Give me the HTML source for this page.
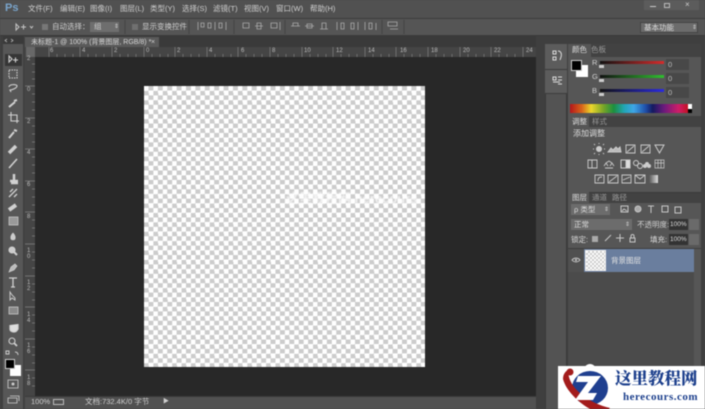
<!DOCTYPE html>
<html lang="zh"><head><meta charset="utf-8"><style>
html,body{margin:0;padding:0;width:705px;height:409px;overflow:hidden;background:#4a4a4a}
*{box-sizing:border-box}
.a{position:absolute}
#m{filter:blur(.55px)}
.t{position:absolute;white-space:nowrap;font-family:"Liberation Sans","Noto Sans CJK SC",sans-serif;font-size:7.500px;color:#cfcfcf;line-height:10px}
.r{font-size:6px;line-height:9px;color:#bdbdbd}
.v{font-size:6px;line-height:6px;width:5px;white-space:normal;color:#bdbdbd;left:27px}
svg{position:absolute;left:0;top:0;overflow:visible}
.ck{background-color:#fff;background-image:repeating-conic-gradient(#cccccc 0 25%,#fff 0 50%)}
</style></head><body>
<div class="a" id="m" style="left:0;top:0;width:705px;height:409px;overflow:hidden">
<div class="a" style="left:0;top:0;width:705px;height:18px;background:#515151"></div>
<div class="a" style="left:0;top:18px;width:705px;height:18px;background:#555;border-top:1px solid #3c3c3c;border-bottom:1px solid #3a3a3a"></div>
<div class="a" style="left:0;top:36px;width:705px;height:373px;background:#444"></div>
<div class="t" style="left:5px;top:2px;font-size:11px;line-height:13px;font-weight:bold;color:#7aa5cc">Ps</div>
<div class="t" style="left:28px;top:4px">文件(F)</div><div class="t" style="left:60px;top:4px">编辑(E)</div><div class="t" style="left:90px;top:4px">图像(I)</div><div class="t" style="left:120px;top:4px">图层(L)</div><div class="t" style="left:150px;top:4px">类型(Y)</div><div class="t" style="left:182px;top:4px">选择(S)</div><div class="t" style="left:213px;top:4px">滤镜(T)</div><div class="t" style="left:244px;top:4px">视图(V)</div><div class="t" style="left:276px;top:4px">窗口(W)</div><div class="t" style="left:310px;top:4px">帮助(H)</div>
<div class="a" style="left:644px;top:0;width:55px;height:10px;background:#5c5c5c"></div>
<div class="a" style="left:650px;top:6px;width:6px;height:1px;background:#ccc"></div><div class="a" style="left:664px;top:3px;width:6px;height:5px;border:1px solid #bbb"></div><div class="t" style="left:685px;top:0;font-size:8px">×</div>
<svg width="705" height="409" fill="none" stroke="#c6c6c6">
<path d="M16 24v6l3-3zM21 27h5M23.500 24.500v5M30 26l1.500 2 1.500-2" stroke-width="1"/>
<path d="M198 22v8M201 23h3v4h-3zM208 23h3v5h-3zM215 22v8M219 23h3v5h-3zM226 22v8M243 23h6v5h-6zM255 26h8M257 23h4v6h-4zM271 23h6v5h-6zM280 22v8M291 26h9M293 23h5v3h-5zM305 26h9M307 24h5v4h-5zM320 29h8M322 23h4v6h-4zM337 22v8M341 23h3v6h-3zM351 23h3v6h-3zM358 22v8M365 22v8M369 23h3v6h-3zM376 23v7M388 22h9v4h-9zM390 29h8" stroke="#aaa" stroke-width=".8"/>
<path d="M189 20v14M234 20v14M285 20v14M382 20v14M404 20v14M125 20v14" stroke="#444"/>
</svg>
<div class="a" style="left:42px;top:24px;width:6px;height:6px;background:#777"></div><div class="t" style="left:52px;top:22px">自动选择：</div>
<div class="a" style="left:90px;top:22px;width:29px;height:10px;background:#6e6e6e"></div><div class="t" style="left:94px;top:22px">组</div><div class="t" style="left:114px;top:22px;font-size:6px">⇕</div>
<div class="a" style="left:132px;top:24px;width:6px;height:6px;background:#707070"></div><div class="t" style="left:142px;top:22px">显示变换控件</div>
<div class="a" style="left:640px;top:22px;width:58px;height:11px;background:#6c6c6c;border:1px solid #444"></div><div class="t" style="left:644px;top:23px;color:#ddd">基本功能</div><div class="t" style="left:692px;top:23px;font-size:6px">⇕</div>

<!-- left tool panel -->
<div class="a" style="left:0;top:36px;width:3px;height:373px;background:#3f3f3f"></div>
<div class="a" style="left:3px;top:44px;width:21px;height:365px;background:#575757;border-right:1px solid #3c3c3c"></div>
<div class="a" style="left:3px;top:36px;width:21px;height:8px;background:#3a3a3a"></div>
<div class="a" style="left:5px;top:54px;width:17px;height:12px;background:#363636"></div>
<svg width="705" height="409" fill="none" stroke="#d0d0d0" stroke-width="1.100" style="z-index:3">
<path d="M7 39l-2 1.500 2 1.500M11 39l2 1.500-2 1.500" stroke-width=".7"/>
<path d="M9 56v6l3-3zM13 60h5M15.500 57.500v5"/>
<path d="M9 70h8v8H9z" stroke-dasharray="1.500 1"/>
<path d="M9 87c0-3 8-3 8-1s-5 4-7 4l1 2"/>
<path d="M9 107l6-5M14 101l3-1" stroke-width="2"/>
<path d="M11 112v9h8M8 115h9v8"/>
<path d="M9 138l5-6M14 130l3 1" stroke-width="2"/>
<path d="M9 153l7-7" stroke-width="3.500"/>
<path d="M9 168l8-9" stroke-width="1.600"/>
<path d="M11 183h7M14 174v6M10 181h8" stroke-width="2.500"/>
<path d="M9 197l8-8M10 192l3-3M14 197l3-3" stroke-width="1.300"/>
<path d="M9 210l7-5" stroke-width="4"/>
<path d="M9 217h9v8H9z" fill="#999" stroke="#ccc" stroke-width=".7"/>
<path d="M13 233c-3 3-3 7 0 7s3-4 0-7z" fill="#ccc" stroke-width=".6"/>
<circle cx="12" cy="250" r="3" fill="#ccc"/><path d="M14 252l3 3" stroke-width="2"/>
<path d="M9 272l2-5 4-3 2 2-3 4z" fill="#bbb" stroke-width=".7"/>
<path d="M9 278h8M13 278v9M11 287h4" stroke-width="1.300"/>
<path d="M10 292v8l2-2 3 2v-2l-3-3z" stroke-width=".9"/>
<path d="M9 307h9v7H9z" fill="#8a8a8a" stroke-width=".7"/>
<path d="M10 325v4c0 2 2 3 4 3s3-1 4-3v-5" fill="#ddd" stroke-width="1.300"/>
<circle cx="12" cy="341" r="3"/><path d="M14 343l3 3" stroke-width="1.800"/>
<path d="M15 352c2 0 3 1 3 3M6 351h3v3H6z" stroke-width=".9"/>
<path d="M8 380h10v8H8z" stroke-width=".8"/><circle cx="13" cy="384" r="1.500" fill="#ccc" stroke="none"/>
<path d="M8 398h9v5H8zM10 396h9v5" stroke-width=".8"/>
</svg>
<div class="a" style="left:10px;top:365px;width:11px;height:11px;background:#fff"></div>
<div class="a" style="left:5px;top:359px;width:10px;height:10px;background:#000;border:1px solid #ccc"></div>

<!-- tab -->
<div class="a" style="left:25px;top:36px;width:520px;height:11px;background:#3a3a3a"></div>
<div class="a" style="left:25px;top:37px;width:134px;height:10px;background:#5a5a5a"></div>
<div class="t" style="left:31px;top:38px;font-size:7px;line-height:9px;color:#d8d8d8">未标题-1 @ 100% (背景图层, RGB/8) *</div><div class="t" style="left:151px;top:38px;font-size:7px;line-height:9px">×</div>

<!-- rulers -->
<div class="a" style="left:25px;top:47px;width:510px;height:10px;background:#454545"></div>
<div class="a" style="left:25px;top:47px;width:10px;height:349px;background:#454545"></div>
<div class="a" style="left:26px;top:47px;width:9px;height:10px;background:#686868"></div>
<div class="a" style="left:35px;top:57px;width:501px;height:339px;background:#282828"></div>
<svg width="705" height="409" fill="none" stroke="#808080" stroke-width=".7">
<path d="M49 47v10M80 47v10M112 47v10M144 47v10M175 47v10M207 47v10M238 47v10M270 47v10M302 47v10M333 47v10M365 47v10M396 47v10M428 47v10M460 47v10M491 47v10M523 47v10"/>
<path d="M57 57v-3M65 57v-3M73 57v-3M88 57v-3M96 57v-3M104 57v-3M120 57v-3M128 57v-3M136 57v-3M152 57v-3M160 57v-3M168 57v-3M183 57v-3M191 57v-3M199 57v-3M215 57v-3M223 57v-3M231 57v-3M246 57v-3M254 57v-3M262 57v-3M278 57v-3M286 57v-3M294 57v-3M310 57v-3M318 57v-3M326 57v-3M341 57v-3M349 57v-3M357 57v-3M373 57v-3M381 57v-3M389 57v-3M404 57v-3M412 57v-3M420 57v-3M436 57v-3M444 57v-3M452 57v-3M468 57v-3M476 57v-3M484 57v-3M499 57v-3M507 57v-3M515 57v-3"/>
<path d="M25 86h10M25 118h10M25 149h10M25 181h10M25 212h10M25 244h10M25 276h10M25 307h10M25 339h10M25 370h10"/>
<path d="M32 64h3M32 72h3M32 79h3M32 94h3M32 102h3M32 110h3M32 126h3M32 134h3M32 142h3M32 157h3M32 165h3M32 173h3M32 189h3M32 197h3M32 205h3M32 220h3M32 228h3M32 236h3M32 252h3M32 260h3M32 268h3M32 284h3M32 292h3M32 300h3M32 315h3M32 323h3M32 331h3M32 347h3M32 355h3M32 363h3M32 378h3M32 386h3"/>
</svg>
<div class="t r" style="left:50px;top:47px">6</div><div class="t r" style="left:82px;top:47px">4</div><div class="t r" style="left:114px;top:47px">2</div><div class="t r" style="left:146px;top:47px">0</div><div class="t r" style="left:177px;top:47px">2</div><div class="t r" style="left:209px;top:47px">4</div><div class="t r" style="left:241px;top:47px">6</div><div class="t r" style="left:272px;top:47px">8</div><div class="t r" style="left:304px;top:47px">10</div><div class="t r" style="left:336px;top:47px">12</div><div class="t r" style="left:368px;top:47px">14</div><div class="t r" style="left:400px;top:47px">16</div><div class="t r" style="left:431px;top:47px">18</div><div class="t r" style="left:463px;top:47px">20</div><div class="t r" style="left:494px;top:47px">22</div><div class="t r" style="left:526px;top:47px">24</div>
<div class="t r" style="left:27px;top:55px">2</div><div class="t r" style="left:27px;top:86px">0</div><div class="t r" style="left:27px;top:118px">2</div><div class="t r" style="left:27px;top:149px">4</div><div class="t r" style="left:27px;top:181px">6</div><div class="t r" style="left:27px;top:213px">8</div>
<div class="t v" style="top:248px">1 0</div><div class="t v" style="top:280px">1 2</div><div class="t v" style="top:312px">1 4</div><div class="t v" style="top:343px">1 6</div><div class="t v" style="top:375px">1 8</div>

<!-- canvas -->
<div class="a ck" style="left:144px;top:86px;width:281px;height:281px;background-size:9.400px 9.400px;overflow:hidden"><div class="t" style="left:142px;top:105px;font-size:13px;line-height:16px;color:#fff;opacity:.8;font-weight:bold;filter:blur(.6px)">这里教程网 herecours</div></div>

<!-- status -->
<div class="a" style="left:25px;top:396px;width:511px;height:13px;background:#515151;border-top:1px solid #3a3a3a"></div>
<div class="t" style="left:31px;top:397px">100%</div><div class="a" style="left:53px;top:399px;width:11px;height:6px;border:1px solid #bbb"></div><div class="t" style="left:85px;top:397px">文档:732.4K/0 字节</div>
<div class="t" style="left:163px;top:397px;font-size:6px">▶</div>

<!-- right strip -->
<div class="a" style="left:536px;top:36px;width:169px;height:373px;background:#3f3f3f"></div>
<div class="a" style="left:545px;top:44px;width:22px;height:365px;background:#535353;border-left:1px solid #3a3a3a;border-right:1px solid #3a3a3a"></div>
<div class="a" style="left:545px;top:44px;width:22px;height:25px;background:#5c5c5c"></div>
<div class="a" style="left:545px;top:69px;width:22px;height:25px;background:#5c5c5c;border-top:1px solid #3c3c3c;border-bottom:1px solid #3c3c3c"></div>
<svg width="705" height="409" fill="none" stroke="#ddd" stroke-width="1"><path d="M553 51h3v3h-3zM553 57h3v3h-3zM558 51c3 0 4 3 3 6l-1 3M553 77h3v3h-3zM553 82h7M558 77h4M558 80h4M558 84h4"/></svg>

<!-- panels -->
<div class="a" style="left:568px;top:44px;width:133px;height:365px;background:#565656"></div>
<div class="a" style="left:568px;top:44px;width:133px;height:13px;background:#424242"></div>
<div class="a" style="left:568px;top:44px;width:23px;height:13px;background:#565656"></div>
<div class="t" style="left:572px;top:45px;color:#ddd">颜色</div><div class="t" style="left:591px;top:45px;color:#999">色板</div>
<div class="a" style="left:576px;top:65px;width:12px;height:12px;background:#fff"></div>
<div class="a" style="left:571px;top:60px;width:11px;height:11px;background:#000;border:1px solid #ccc"></div>
<div class="t" style="left:592px;top:58px">R</div><div class="t" style="left:592px;top:72px">G</div><div class="t" style="left:592px;top:86px">B</div>
<div class="a" style="left:600px;top:61px;width:64px;height:3px;background:linear-gradient(90deg,#111,#d62b2b)"></div>
<div class="a" style="left:600px;top:75px;width:64px;height:3px;background:linear-gradient(90deg,#111,#2fc02f)"></div>
<div class="a" style="left:600px;top:89px;width:64px;height:3px;background:linear-gradient(90deg,#111,#2a2ae0)"></div>
<div class="a" style="left:599px;top:65px;width:5px;height:3px;background:#ccc"></div><div class="a" style="left:599px;top:79px;width:5px;height:3px;background:#ccc"></div><div class="a" style="left:599px;top:93px;width:5px;height:3px;background:#ccc"></div>
<div class="a" style="left:666px;top:59px;width:23px;height:11px;background:#484848"></div><div class="a" style="left:666px;top:73px;width:23px;height:11px;background:#484848"></div><div class="a" style="left:666px;top:87px;width:23px;height:11px;background:#484848"></div>
<div class="t" style="left:668px;top:60px;color:#bbb">0</div><div class="t" style="left:668px;top:74px;color:#bbb">0</div><div class="t" style="left:668px;top:88px;color:#bbb">0</div>
<div class="a" style="left:570px;top:104px;width:118px;height:9px;background:linear-gradient(90deg,#b3161b,#d8641a 10%,#ecd72c 18%,#7ca628 28%,#1c8f3e 37%,#22a5b5 46%,#3fa6e6 54%,#1f4fa8 64%,#141a60 70%,#6e1a7c 80%,#cf1d68 92%,#c21224)"></div>
<div class="a" style="left:688px;top:104px;width:4px;height:5px;background:#fff"></div><div class="a" style="left:688px;top:109px;width:4px;height:4px;background:#000"></div>
<div class="a" style="left:568px;top:116px;width:133px;height:11px;background:#424242"></div><div class="a" style="left:568px;top:116px;width:21px;height:11px;background:#565656"></div>
<div class="t" style="left:572px;top:117px;color:#ddd">调整</div><div class="t" style="left:592px;top:117px;color:#999">样式</div>
<div class="t" style="left:573px;top:129px;font-size:8px;color:#ddd">添加调整</div>
<svg width="705" height="409" fill="none" stroke="#ccc" stroke-width="1">
<circle cx="599" cy="149" r="2.500" fill="#ccc"/><path d="M599 144v-1M599 155v-1M594 149h-1M605 149h-1M595 145l-1-1M603 153l1 1M603 145l1-1M595 153l-1 1"/>
<path d="M608 152l3-4 2 2 3-3 2 2 2-2 1 5z" fill="#bbb"/>
<path d="M626 145h9v8h-9zM627 152l7-6M641 145h9v8h-9zM642 152l7-6" stroke-width=".9"/>
<path d="M655 145h9l-4.500 8z"/>
<path d="M588 160h9v8h-9zM592 160v8" stroke-width=".9"/>
<path d="M605 168h8M606 163l3-2 3 2M604 166l2-3 2 3M610 166l2-3 2 3" stroke-width=".9"/>
<path d="M621 160h9v8h-9z"/><path d="M626 160h4v8h-4z" fill="#ddd"/>
<circle cx="636" cy="163" r="2.500"/><circle cx="640" cy="166" r="2.500"/>
<path d="M655 160h9v8h-9zM655 163h9M658 160v8M661 160v8" stroke-width=".7"/>
<path d="M595 175h9v8h-9zM598 181c0-3 1-4 4-4M608 175h10v8h-10zM609 182l8-6M622 175h9v8h-9zM623 180l7-3M635 175h10v8h-10zM635 175l5 4 5-4" stroke-width=".9"/>
</svg>
<div class="a" style="left:645px;top:162px;width:4px;height:4px;border-radius:50%;background:#ccc"></div><div class="a" style="left:647px;top:164px;width:4px;height:4px;border-radius:50%;background:#ccc"></div><div class="a" style="left:643px;top:164px;width:4px;height:4px;border-radius:50%;background:#ccc"></div>
<div class="a" style="left:649px;top:175px;width:9px;height:8px;background:linear-gradient(90deg,#555,#ddd)"></div>

<!-- layers -->
<div class="a" style="left:568px;top:192px;width:133px;height:11px;background:#424242;border-top:1px solid #3a3a3a"></div><div class="a" style="left:568px;top:192px;width:21px;height:11px;background:#565656"></div>
<div class="t" style="left:572px;top:193px;color:#ddd">图层</div><div class="t" style="left:592px;top:193px;color:#999">通道</div><div class="t" style="left:612px;top:193px;color:#999">路径</div>
<div class="a" style="left:571px;top:204px;width:39px;height:11px;background:#6c6c6c"></div><div class="t" style="left:574px;top:205px;color:#ddd">ρ 类型</div><div class="t" style="left:604px;top:205px;font-size:6px">⇕</div>
<svg width="705" height="409" fill="none" stroke="#c8c8c8" stroke-width="1"><path d="M621 206h7v6h-7zM622 211l2-2 3 2"/><circle cx="638" cy="209" r="3" fill="#aaa"/><path d="M648 206h6M651 206v7M662 206h6v6h-6zM675 207h6v6h-6z"/><path d="M605 241l6-6M616 238h8M620 234v8"/><path d="M630 238h5v4h-5zM631 238v-2c0-2 3-2 3 0v2"/></svg>
<div class="a" style="left:571px;top:219px;width:61px;height:11px;background:#6c6c6c"></div><div class="t" style="left:574px;top:220px;color:#ddd">正常</div><div class="t" style="left:625px;top:220px;font-size:6px">⇕</div>
<div class="t" style="left:637px;top:220px">不透明度:</div><div class="a" style="left:669px;top:219px;width:19px;height:11px;background:#333"></div><div class="t" style="left:670px;top:220px;font-size:6.500px;color:#ddd">100%</div><div class="a" style="left:689px;top:219px;width:10px;height:11px;background:#6a6a6a"></div>
<div class="t" style="left:571px;top:235px;color:#ddd">锁定:</div><div class="a" style="left:592px;top:236px;width:6px;height:6px;background:#aaa"></div>
<div class="t" style="left:650px;top:235px;color:#ddd">填充:</div><div class="a" style="left:669px;top:234px;width:19px;height:11px;background:#333"></div><div class="t" style="left:670px;top:235px;font-size:6.500px;color:#ddd">100%</div><div class="a" style="left:689px;top:234px;width:10px;height:11px;background:#6a6a6a"></div>
<div class="a" style="left:568px;top:248px;width:133px;height:1px;background:#3e3e3e"></div>
<div class="a" style="left:568px;top:249px;width:16px;height:23px;background:#505050"></div>
<div class="a" style="left:584px;top:249px;width:110px;height:23px;background:#6a7e9e"></div>
<svg width="705" height="409" fill="none" stroke="#ccc"><path d="M572 260c2-2.500 6-2.500 8 0-2 2.500-6 2.500-8 0z" stroke-width=".9"/><circle cx="576" cy="260" r="1" fill="#ccc" stroke="none"/></svg>
<div class="a ck" style="left:585px;top:250px;width:21px;height:21px;border:1px solid #eee;background-size:4px 4px"></div>
<div class="t" style="left:611px;top:256px;color:#e4e4e4">背景图层</div>
<div class="a" style="left:568px;top:272px;width:126px;height:137px;background:#4b4b4b"></div>
<div class="a" style="left:694px;top:249px;width:7px;height:160px;background:#565656"></div>

<!-- watermark -->
<div class="a" style="left:558px;top:366px;width:147px;height:43px;background:#fff"></div>
<div class="a" style="left:584px;top:364px;width:12px;height:6px;border-radius:6px 6px 0 0;background:#fff"></div>
<svg width="705" height="409">
<ellipse cx="590" cy="388" rx="18" ry="17" fill="#1f3f8f"/>
<path d="M563 379c0-6 4-10 9-10-3 2-4 5-3 8 3 12 19 26 41 31l-2 2h-16c-12-6-26-19-29-31z" fill="#a31c1c"/>
<circle cx="570" cy="372" r="3.500" fill="#a31c1c"/>
<path d="M578 376h23l-13 17h9l-4 7h-18l13-18h-12z" fill="#fff"/>
</svg>
<div class="t" style="left:615px;top:369px;font-family:'Liberation Serif','Noto Serif CJK SC',serif;font-size:16.500px;line-height:20px;font-weight:900;color:#1c3f8c">这里教程网</div>
<div class="t" style="left:623px;top:391px;font-family:'Liberation Serif',serif;font-size:11px;line-height:13px;font-weight:bold;color:#1c3f8c;letter-spacing:.5px">herecours.com</div>
</div>
</body></html>
